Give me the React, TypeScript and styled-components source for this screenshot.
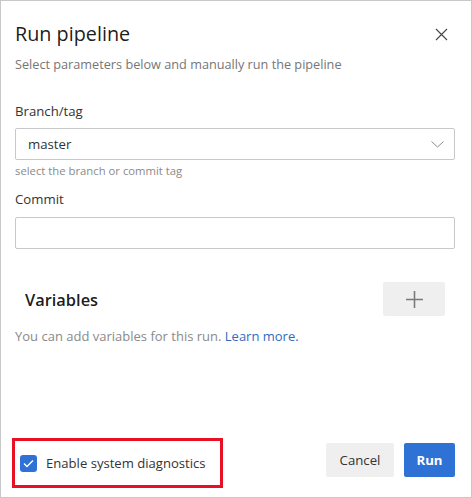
import React from 'react'
import styled, { createGlobalStyle } from 'styled-components'

const GlobalStyle = createGlobalStyle`
  html, body { margin: 0; padding: 0; background: #ffffff; }
  body { font-family: "Open Sans", "Noto Sans", "Liberation Sans", sans-serif; }
`;

const Panel = styled.div`
  box-sizing: border-box;
  width: 472px;
  height: 498px;
  border: 1px solid #c8c8c8;
  background: #ffffff;
  padding: 19px 16px 16px 14px;
  display: flex;
  flex-direction: column;
`;

const Header = styled.div`
  display: flex;
  align-items: center;
  justify-content: space-between;
  height: 28px;
`;

const Title = styled.h1`
  margin: 0;
  font-size: 19.8px;
  font-weight: 400;
  line-height: 28px;
  color: rgba(0, 0, 0, 0.9);
`;

const CloseButton = styled.button`
  border: 0;
  background: none;
  padding: 0;
  width: 14px;
  height: 14px;
  margin-right: 7px;
  display: flex;
  align-items: center;
  justify-content: center;
  cursor: pointer;
`;

const Subtitle = styled.p`
  margin: 7px 0 0;
  font-size: 12.7px;
  line-height: 18px;
  color: #767676;
`;

const Label = styled.div<{ $top: number }>`
  margin-top: ${p => p.$top}px;
  font-size: 13.2px;
  line-height: 20px;
  color: #333333;
`;

const Field = styled.div<{ $top: number }>`
  box-sizing: border-box;
  margin-top: ${p => p.$top}px;
  height: 32px;
  border: 1px solid #c8c8c8;
  border-radius: 2px;
  display: flex;
  align-items: center;
  justify-content: space-between;
  padding: 0 10px 0 12px;
  font-size: 13.2px;
  color: #333333;
`;

const Helper = styled.div`
  margin-top: 3px;
  font-size: 11.3px;
  line-height: 16px;
  color: #8a8a8a;
`;

const VariablesRow = styled.div`
  margin-top: 33px;
  height: 34px;
  display: flex;
  align-items: center;
  justify-content: space-between;
  padding-left: 10px;
  padding-right: 10px;
`;

const SectionTitle = styled.h2`
  margin: 0;
  font-size: 16.4px;
  font-weight: 600;
  color: rgba(0, 0, 0, 0.9);
`;

const GhostButton = styled.button<{ $w: number }>`
  box-sizing: border-box;
  width: ${p => p.$w}px;
  height: 34px;
  border: 0;
  border-radius: 2px;
  background: #efefef;
  color: #333333;
  font-family: inherit;
  font-size: 13.2px;
  display: flex;
  align-items: center;
  justify-content: center;
  padding: 0;
  cursor: pointer;
`;

const PrimaryButton = styled(GhostButton)`
  background: #2f72d6;
  color: #ffffff;
  font-weight: 700;
`;

const Note = styled.p`
  margin: 11px 0 0;
  font-size: 13px;
  line-height: 18px;
  color: #8a8a8a;
`;

const Link = styled.a`
  color: #2f6cbf;
  text-decoration: none;
`;

const Footer = styled.div`
  margin-top: auto;
  display: flex;
  align-items: center;
  justify-content: space-between;
`;

const Highlight = styled.div`
  box-sizing: border-box;
  margin-left: -3px;
  margin-bottom: -7px;
  width: 211px;
  height: 50px;
  border: 3px solid #e81123;
  display: flex;
  align-items: center;
  gap: 9px;
  padding-left: 5px;
`;

const CheckBox = styled.span`
  width: 17px;
  height: 17px;
  border-radius: 3px;
  background: #2f72d6;
  display: flex;
  align-items: center;
  justify-content: center;
`;

const CheckLabel = styled.span`
  font-size: 13.1px;
  color: #333333;
`;

const Actions = styled.div`
  display: flex;
  gap: 10px;
`;

export default function App() {
  return (
    <>
      <GlobalStyle />
      <Panel>
        <Header>
          <Title>Run pipeline</Title>
          <CloseButton aria-label="Close">
            <svg width="13" height="13" viewBox="0 0 13 13">
              <path d="M1 1L12 12M12 1L1 12" stroke="#444" strokeWidth="1.1" fill="none" />
            </svg>
          </CloseButton>
        </Header>
        <Subtitle>Select parameters below and manually run the pipeline</Subtitle>

        <Label $top={28}>Branch/tag</Label>
        <Field $top={7}>
          <span>master</span>
          <svg width="13" height="7" viewBox="0 0 13 7">
            <path d="M0.5 0.5L6.5 6L12.5 0.5" stroke="#8a8a8a" strokeWidth="1" fill="none" />
          </svg>
        </Field>
        <Helper>select the branch or commit tag</Helper>

        <Label $top={10}>Commit</Label>
        <Field $top={8} />

        <VariablesRow>
          <SectionTitle>Variables</SectionTitle>
          <GhostButton $w={62} aria-label="Add variable">
            <svg width="17" height="17" viewBox="0 0 17 17">
              <path d="M8.5 0V17M0 8.5H17" stroke="#7a7a7a" strokeWidth="1.6" fill="none" />
            </svg>
          </GhostButton>
        </VariablesRow>
        <Note>
          You can add variables for this run. <Link href="#">Learn more.</Link>
        </Note>

        <Footer>
          <Highlight>
            <CheckBox>
              <svg width="11" height="9" viewBox="0 0 11 9">
                <path d="M1 4.5L4 7.5L10 1.5" stroke="#ffffff" strokeWidth="1.4" fill="none" />
              </svg>
            </CheckBox>
            <CheckLabel>Enable system diagnostics</CheckLabel>
          </Highlight>
          <Actions>
            <GhostButton $w={68}>Cancel</GhostButton>
            <PrimaryButton $w={51}>Run</PrimaryButton>
          </Actions>
        </Footer>
      </Panel>
    </>
  )
}
